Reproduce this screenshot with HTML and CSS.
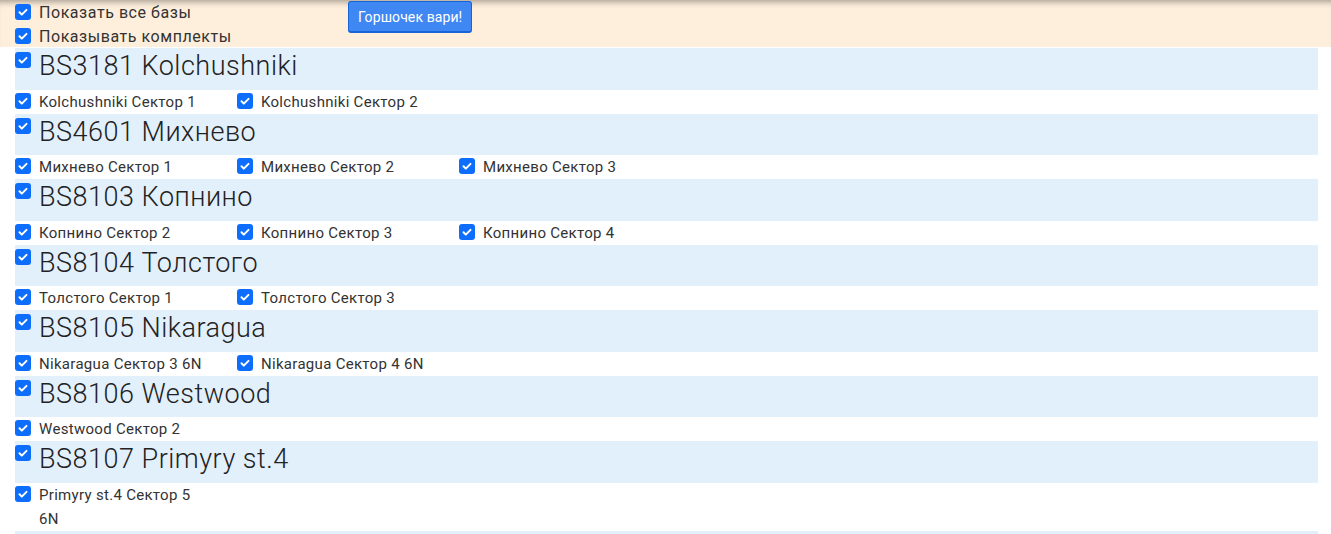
FILE: index.html
```html
<!DOCTYPE html>
<html lang="ru">
<head>
<meta charset="utf-8">
<link rel="stylesheet" href="styles.css">
</head>
<body>
<header class="top">
  <div class="opts">
    <label class="opt"><span class="cb"><svg viewBox="0 0 16 16"><path d="M4.5 8.3l2.3 2.3 4.7-4.7"/></svg></span>Показать все базы</label>
    <label class="opt"><span class="cb"><svg viewBox="0 0 16 16"><path d="M4.5 8.3l2.3 2.3 4.7-4.7"/></svg></span>Показывать комплекты</label>
  </div>
  <button class="btn">Горшочек вари!</button>
</header>
<main class="list">
  <section class="base">
    <div class="base-head"><span class="cb"><svg viewBox="0 0 16 16"><path d="M4.5 8.3l2.3 2.3 4.7-4.7"/></svg></span><h2>BS3181 Kolchushniki</h2></div>
    <div class="sectors">
      <label class="sector"><span class="cb"><svg viewBox="0 0 16 16"><path d="M4.5 8.3l2.3 2.3 4.7-4.7"/></svg></span><span class="name">Kolchushniki Сектор 1</span></label>
      <label class="sector"><span class="cb"><svg viewBox="0 0 16 16"><path d="M4.5 8.3l2.3 2.3 4.7-4.7"/></svg></span><span class="name">Kolchushniki Сектор 2</span></label>
    </div>
  </section>
  <section class="base">
    <div class="base-head"><span class="cb"><svg viewBox="0 0 16 16"><path d="M4.5 8.3l2.3 2.3 4.7-4.7"/></svg></span><h2>BS4601 Михнево</h2></div>
    <div class="sectors">
      <label class="sector"><span class="cb"><svg viewBox="0 0 16 16"><path d="M4.5 8.3l2.3 2.3 4.7-4.7"/></svg></span><span class="name">Михнево Сектор 1</span></label>
      <label class="sector"><span class="cb"><svg viewBox="0 0 16 16"><path d="M4.5 8.3l2.3 2.3 4.7-4.7"/></svg></span><span class="name">Михнево Сектор 2</span></label>
      <label class="sector"><span class="cb"><svg viewBox="0 0 16 16"><path d="M4.5 8.3l2.3 2.3 4.7-4.7"/></svg></span><span class="name">Михнево Сектор 3</span></label>
    </div>
  </section>
  <section class="base">
    <div class="base-head"><span class="cb"><svg viewBox="0 0 16 16"><path d="M4.5 8.3l2.3 2.3 4.7-4.7"/></svg></span><h2>BS8103 Копнино</h2></div>
    <div class="sectors">
      <label class="sector"><span class="cb"><svg viewBox="0 0 16 16"><path d="M4.5 8.3l2.3 2.3 4.7-4.7"/></svg></span><span class="name">Копнино Сектор 2</span></label>
      <label class="sector"><span class="cb"><svg viewBox="0 0 16 16"><path d="M4.5 8.3l2.3 2.3 4.7-4.7"/></svg></span><span class="name">Копнино Сектор 3</span></label>
      <label class="sector"><span class="cb"><svg viewBox="0 0 16 16"><path d="M4.5 8.3l2.3 2.3 4.7-4.7"/></svg></span><span class="name">Копнино Сектор 4</span></label>
    </div>
  </section>
  <section class="base">
    <div class="base-head"><span class="cb"><svg viewBox="0 0 16 16"><path d="M4.5 8.3l2.3 2.3 4.7-4.7"/></svg></span><h2>BS8104 Толстого</h2></div>
    <div class="sectors">
      <label class="sector"><span class="cb"><svg viewBox="0 0 16 16"><path d="M4.5 8.3l2.3 2.3 4.7-4.7"/></svg></span><span class="name">Толстого Сектор 1</span></label>
      <label class="sector"><span class="cb"><svg viewBox="0 0 16 16"><path d="M4.5 8.3l2.3 2.3 4.7-4.7"/></svg></span><span class="name">Толстого Сектор 3</span></label>
    </div>
  </section>
  <section class="base">
    <div class="base-head"><span class="cb"><svg viewBox="0 0 16 16"><path d="M4.5 8.3l2.3 2.3 4.7-4.7"/></svg></span><h2>BS8105 Nikaragua</h2></div>
    <div class="sectors">
      <label class="sector"><span class="cb"><svg viewBox="0 0 16 16"><path d="M4.5 8.3l2.3 2.3 4.7-4.7"/></svg></span><span class="name">Nikaragua Сектор 3 6N</span></label>
      <label class="sector"><span class="cb"><svg viewBox="0 0 16 16"><path d="M4.5 8.3l2.3 2.3 4.7-4.7"/></svg></span><span class="name">Nikaragua Сектор 4 6N</span></label>
    </div>
  </section>
  <section class="base">
    <div class="base-head"><span class="cb"><svg viewBox="0 0 16 16"><path d="M4.5 8.3l2.3 2.3 4.7-4.7"/></svg></span><h2>BS8106 Westwood</h2></div>
    <div class="sectors">
      <label class="sector"><span class="cb"><svg viewBox="0 0 16 16"><path d="M4.5 8.3l2.3 2.3 4.7-4.7"/></svg></span><span class="name">Westwood Сектор 2</span></label>
    </div>
  </section>
  <section class="base">
    <div class="base-head"><span class="cb"><svg viewBox="0 0 16 16"><path d="M4.5 8.3l2.3 2.3 4.7-4.7"/></svg></span><h2>BS8107 Primyry st.4</h2></div>
    <div class="sectors">
      <label class="sector"><span class="cb"><svg viewBox="0 0 16 16"><path d="M4.5 8.3l2.3 2.3 4.7-4.7"/></svg></span><span class="name">Primyry st.4 Сектор 5<br>6N</span></label>
    </div>
  </section>
  <section class="base">
    <div class="base-head base-next"></div>
  </section>
</main>
</body>
</html>
```
FILE: styles.css
```css
* { box-sizing: border-box; }
html, body { margin: 0; padding: 0; }
body {
  font-family: Roboto, "Noto Sans", sans-serif;
  color: #212529;
  background: #fff;
  overflow: hidden;
  height: 534px;
}
.cb {
  flex: 0 0 16px;
  width: 16px;
  height: 16px;
  border-radius: 3px;
  background: #0d6efd;
  display: inline-flex;
}
.cb svg {
  width: 16px;
  height: 16px;
  fill: none;
  stroke: #fff;
  stroke-width: 2;
  stroke-linecap: round;
  stroke-linejoin: round;
}
.top {
  display: flex;
  align-items: flex-start;
  height: 47px;
  padding-left: 15px;
  background: #feefdc;
  box-shadow: inset 0 7px 6px -5px rgba(0, 0, 0, 0.35);
}
.opts {
  width: 333px;
  display: flex;
  flex-direction: column;
  padding-top: 4px;
}
.opt {
  display: flex;
  align-items: flex-start;
  gap: 8px;
  height: 24px;
  font-size: 16px;
  letter-spacing: 0.55px;
  color: #333;
  line-height: 17px;
}
.btn {
  margin-top: 1px;
  height: 32px;
  padding: 0 9px;
  background: #3f87f3;
  color: #fff;
  border: 1px solid #1764d8;
  border-bottom-width: 2px;
  border-radius: 3px;
  font-family: Roboto, sans-serif;
  font-size: 14px;
  font-weight: 400;
  letter-spacing: 0.1px;
  cursor: pointer;
}
.list {
  margin: 1px 13px 0 15px;
}
.base-head {
  display: flex;
  align-items: flex-start;
  gap: 8px;
  height: 41.5px;
  padding-top: 4px;
  background: #e2f0fc;
}
.base-next { height: 8px; }
.base-head h2 {
  margin: 0;
  margin-top: -3px;
  font-size: 27px;
  font-weight: 300;
  letter-spacing: 0.5px;
  line-height: 34px;
  color: #222;
}
.sectors {
  display: flex;
  flex-wrap: wrap;
}
.sector {
  width: 222px;
  display: flex;
  align-items: flex-start;
  gap: 8px;
  padding-top: 3px;
  min-height: 24px;
  font-size: 15px;
  letter-spacing: 0.3px;
  line-height: 16px;
  color: #333;
}
.sector .name {
  max-width: 190px;
  line-height: 24px;
  margin-top: -3px;
}
```
